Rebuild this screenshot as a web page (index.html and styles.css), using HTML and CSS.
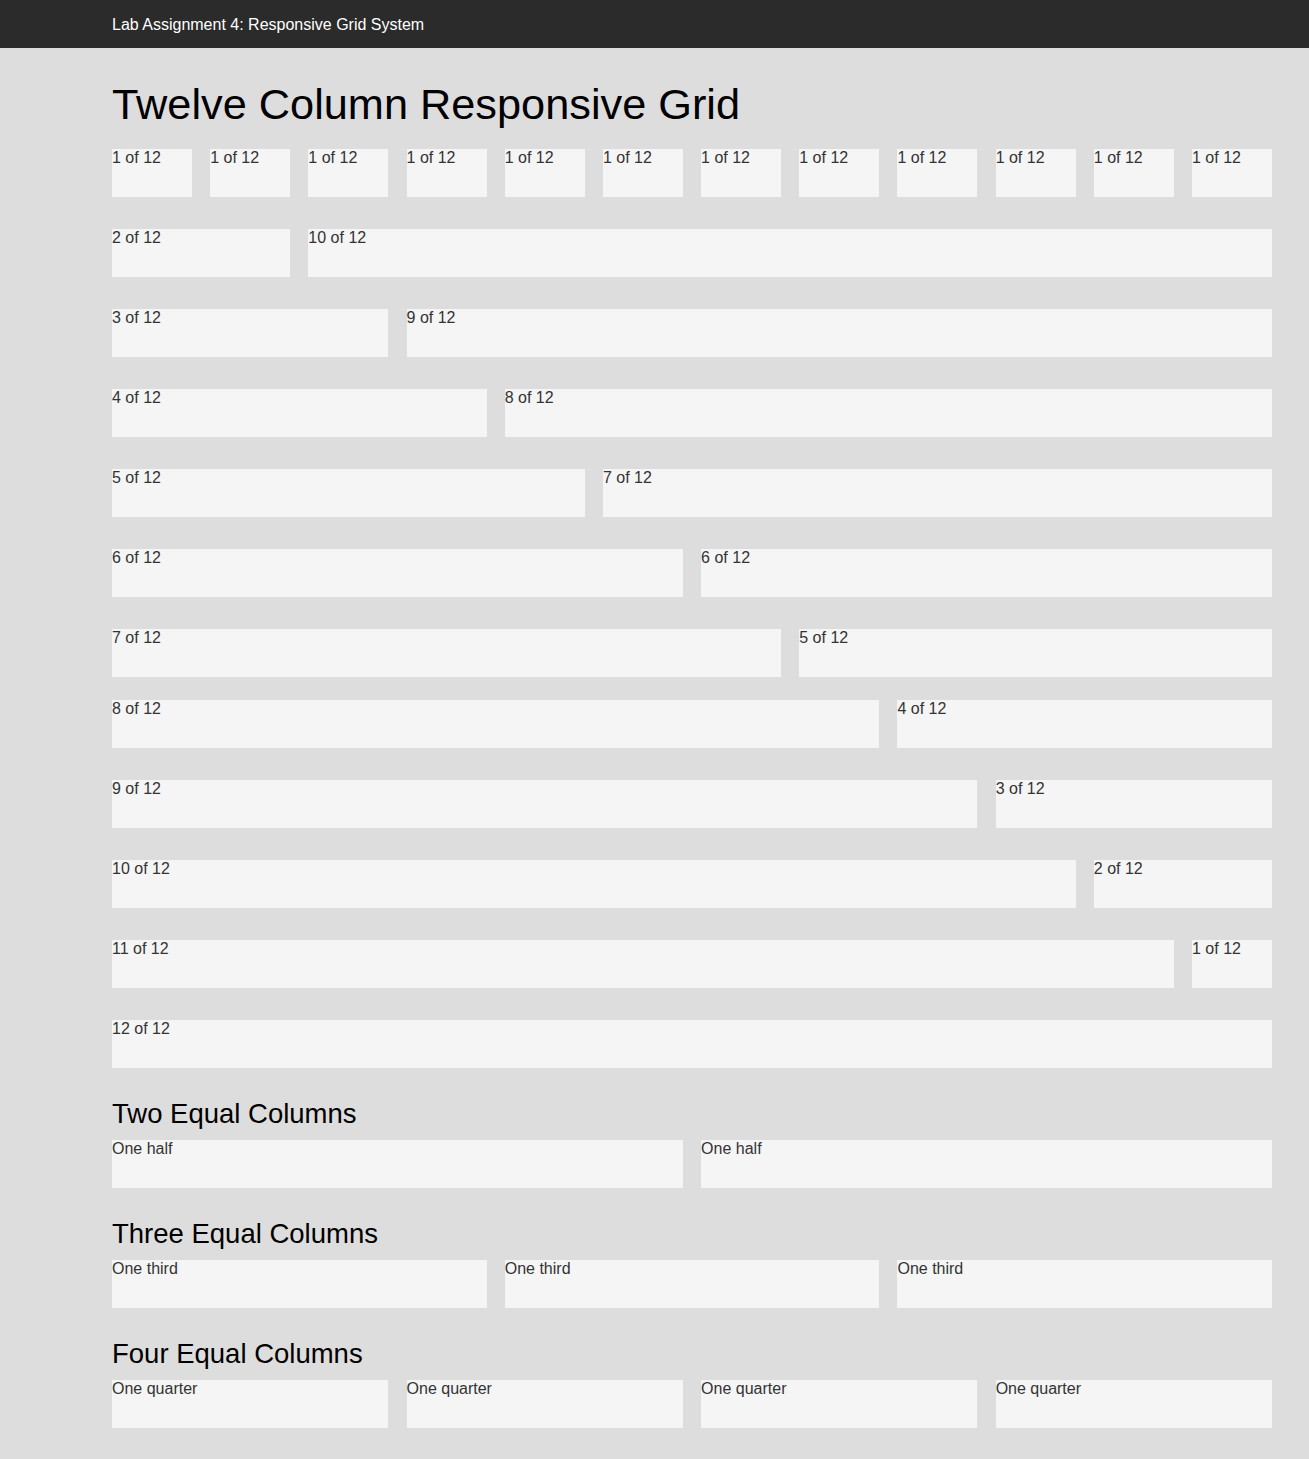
FILE: index.html
```html
<!DOCTYPE html>
<html>
<head>
    <title>Lab Assignment 4: Responsive Grid System</title>
    <link rel="stylesheet" href="styles.css">
</head>
<body>

    <div class="topbar">
        <div class="container">Lab Assignment 4: Responsive Grid System</div>
    </div>

    <div class="container">
        <h1>Twelve Column Responsive Grid</h1>

        <div class="row">
            <div class="col span-1">1 of 12</div>
            <div class="col span-1">1 of 12</div>
            <div class="col span-1">1 of 12</div>
            <div class="col span-1">1 of 12</div>
            <div class="col span-1">1 of 12</div>
            <div class="col span-1">1 of 12</div>
            <div class="col span-1">1 of 12</div>
            <div class="col span-1">1 of 12</div>
            <div class="col span-1">1 of 12</div>
            <div class="col span-1">1 of 12</div>
            <div class="col span-1">1 of 12</div>
            <div class="col span-1">1 of 12</div>
        </div>
        <div class="row">
            <div class="col span-2">2 of 12</div>
            <div class="col span-10">10 of 12</div>
        </div>
        <div class="row">
            <div class="col span-3">3 of 12</div>
            <div class="col span-9">9 of 12</div>
        </div>
        <div class="row">
            <div class="col span-4">4 of 12</div>
            <div class="col span-8">8 of 12</div>
        </div>
        <div class="row">
            <div class="col span-5">5 of 12</div>
            <div class="col span-7">7 of 12</div>
        </div>
        <div class="row">
            <div class="col span-6">6 of 12</div>
            <div class="col span-6">6 of 12</div>
        </div>
        <div class="row tight">
            <div class="col span-7">7 of 12</div>
            <div class="col span-5">5 of 12</div>
        </div>
        <div class="row">
            <div class="col span-8">8 of 12</div>
            <div class="col span-4">4 of 12</div>
        </div>
        <div class="row">
            <div class="col span-9">9 of 12</div>
            <div class="col span-3">3 of 12</div>
        </div>
        <div class="row">
            <div class="col span-10">10 of 12</div>
            <div class="col span-2">2 of 12</div>
        </div>
        <div class="row">
            <div class="col span-11">11 of 12</div>
            <div class="col span-1">1 of 12</div>
        </div>
        <div class="row">
            <div class="col span-12">12 of 12</div>
        </div>

        <h2>Two Equal Columns</h2>
        <div class="row">
            <div class="col span-6">One half</div>
            <div class="col span-6">One half</div>
        </div>

        <h2>Three Equal Columns</h2>
        <div class="row">
            <div class="col span-4">One third</div>
            <div class="col span-4">One third</div>
            <div class="col span-4">One third</div>
        </div>

        <h2>Four Equal Columns</h2>
        <div class="row">
            <div class="col span-3">One quarter</div>
            <div class="col span-3">One quarter</div>
            <div class="col span-3">One quarter</div>
            <div class="col span-3">One quarter</div>
        </div>
    </div>

</body>
</html>
```

FILE: styles.css
```css
body {
    font-family: "Liberation Sans", Arial, sans-serif;
    margin: 0;
    padding: 0;
    background-color: #dddddd;
    color: #333333;
}
.container {
    width: 1160px;
    margin-left: 112px;
}
.topbar {
    background-color: #2b2b2b;
    color: #ffffff;
    height: 48px;
    line-height: 50px;
    font-size: 16px;
}
h1 {
    font-size: 43.3px;
    font-weight: normal;
    line-height: 1;
    color: #000000;
    margin: 35px 0 23px 0;
}
h2 {
    font-size: 27.5px;
    font-weight: normal;
    line-height: 28px;
    color: #000000;
    margin: 0 0 12px 0;
}
.row {
    display: grid;
    grid-template-columns: repeat(12, 1fr);
    column-gap: 18.2px;
    margin-bottom: 32px;
}
.row.tight {
    margin-bottom: 23px;
}
.col {
    background-color: #f5f5f5;
    height: 48px;
    font-size: 16px;
}
.span-1 { grid-column: span 1; }
.span-2 { grid-column: span 2; }
.span-3 { grid-column: span 3; }
.span-4 { grid-column: span 4; }
.span-5 { grid-column: span 5; }
.span-6 { grid-column: span 6; }
.span-7 { grid-column: span 7; }
.span-8 { grid-column: span 8; }
.span-9 { grid-column: span 9; }
.span-10 { grid-column: span 10; }
.span-11 { grid-column: span 11; }
.span-12 { grid-column: span 12; }
```
